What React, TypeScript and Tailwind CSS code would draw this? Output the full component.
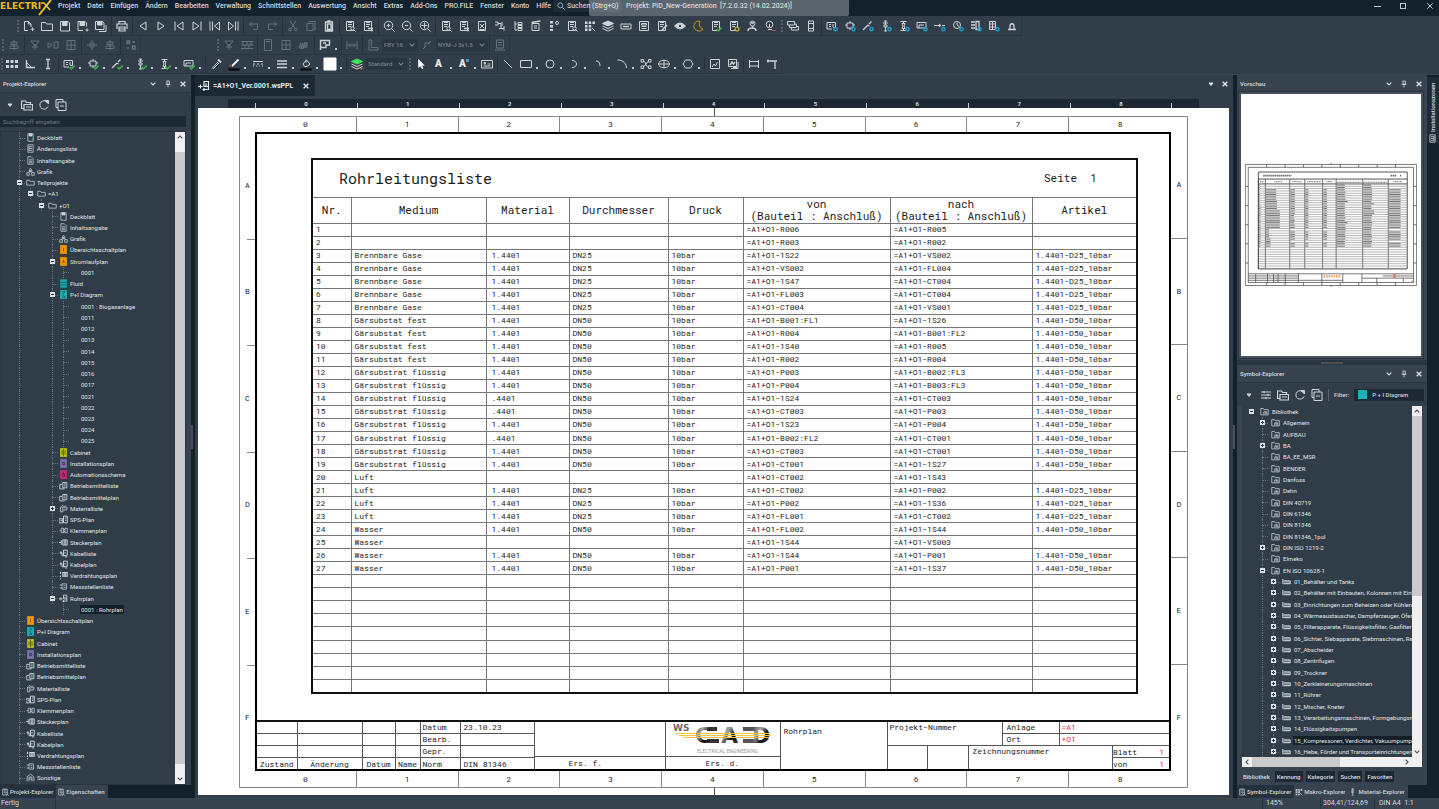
import React from 'react';
import clsx from 'clsx';

type Row = [string, string, string, string, string];

// medium, material, diameter, from, to
const pipeRows: Row[] = [
  ['', '', '', 'R006', 'R005'],
  ['', '', '', 'R003', 'R002'],
  ['Brennbare Gase', '1.4401', 'DN25', '1S22', 'VS002'],
  ['Brennbare Gase', '1.4401', 'DN25', 'VS002', 'FL004'],
  ['Brennbare Gase', '1.4401', 'DN25', '1S47', 'CT004'],
  ['Brennbare Gase', '1.4401', 'DN25', 'FL003', 'CT004'],
  ['Brennbare Gase', '1.4401', 'DN25', 'CT004', 'VS001'],
  ['Gärsubstat fest', '1.4401', 'DN50', 'B001:FL1', '1S26'],
  ['Gärsubstat fest', '1.4401', 'DN50', 'R004', 'B001:FL2'],
  ['Gärsubstat fest', '1.4401', 'DN50', '1S40', 'R005'],
  ['Gärsubstat fest', '1.4401', 'DN50', 'R002', 'R004'],
  ['Gärsubstrat flüssig', '1.4401', 'DN50', 'P003', 'B002:FL3'],
  ['Gärsubstrat flüssig', '1.4401', 'DN50', 'P004', 'B003:FL3'],
  ['Gärsubstrat flüssig', '.4401', 'DN50', '1S24', 'CT003'],
  ['Gärsubstrat flüssig', '.4401', 'DN50', 'CT003', 'P003'],
  ['Gärsubstrat flüssig', '1.4401', 'DN50', '1S23', 'P004'],
  ['Gärsubstrat flüssig', '.4401', 'DN50', 'B002:FL2', 'CT001'],
  ['Gärsubstrat flüssig', '1.4401', 'DN50', 'CT003', 'CT001'],
  ['Gärsubstrat flüssig', '1.4401', 'DN50', 'CT001', '1S27'],
  ['Luft', '', '', 'CT002', '1S43'],
  ['Luft', '1.4401', 'DN25', 'CT002', 'P002'],
  ['Luft', '1.4401', 'DN25', 'P002', '1S36'],
  ['Luft', '1.4401', 'DN25', 'FL001', 'CT002'],
  ['Wasser', '1.4401', 'DN50', 'FL002', '1S44'],
  ['Wasser', '', '', '1S44', 'VS003'],
  ['Wasser', '1.4401', 'DN50', '1S44', 'P001'],
  ['Wasser', '1.4401', 'DN50', 'P001', '1S37'],
];

const EMPTY_ROWS = 9;

function toCells([medium, material, dn, from, to]: Row, index: number): string[] {
  return [
    String(index + 1),
    medium,
    material,
    dn,
    dn && '10bar',
    `=A1+O1-${from}`,
    `=A1+O1-${to}`,
    dn && `1.4401-${dn.replace('N', '')}_10bar`,
  ];
}

/* ---------- icons, all drawn on a 12 x 12 grid ---------- */

const doc = <path d="M2.5 1.5h7v9h-7z" />;
const docLines = <path d="M4 4.5h4M4 6.5h3M4 2.5h4" />;
const lens = (
  <>
    <circle cx="8.5" cy="8.5" r="1.7" fill="#313e49" />
    <path d="M10 10l1.5 1.5" />
  </>
);
const check = <path d="M6.5 9l1.8 1.8L11.6 7.6" stroke="#36b34a" strokeWidth="1.6" />;
const blueDot = <circle cx="9.5" cy="9.2" r="1.6" stroke="#1b9bc9" strokeWidth="1.5" />;

const icons: Record<string, React.ReactNode> = {
  newDoc: <path d="M5 10.5H1.500v-9h4l2.500 2.500v3M5.500 1.500V4h2.500M9.500 7.500v3.500M7.700 9.200h3.600" />,
  folder: <path d="M.5 10.500v-8h4l1 1.500h6v6.500z" />,
  save: (
    <>
      <path d="M1.500 1.500h7.500l1.500 1.500v8h-9z" />
      <path d="M3.500 1.500h4.500v4h-4.500z" fill="currentColor" />
    </>
  ),
  saveAs: (
    <>
      <path d="M6 10.500H1V1.500h7l1.500 1.500v3.500M10 8.500v3M8.500 10h3" />
      <path d="M3 1.500h4.500v4H3z" fill="currentColor" />
    </>
  ),
  saveAll: (
    <>
      <path d="M.5 1.500h7l1.500 1.500v6.500H.5zM11 5v6.500H4" />
      <path d="M2.500 1.500H7v3.500H2.500z" fill="currentColor" />
    </>
  ),
  print: <path d="M3 3.500v-2h6v2M1 9V4h10v5M3 7h6v4H3zM3 9h6" strokeWidth="1.2" />,
  prev: <path d="M9 2v8L3 6z" />,
  next: <path d="M3 2v8l6-4z" />,
  first: <path d="M2 1.500v9M10 2v8L4 6z" />,
  last: <path d="M10 1.500v9M2 2v8l6-4z" />,
  rewind: <path d="M1 1.500v9M3.500 1.500v9M10.500 2v8l-5-4z" />,
  forward: <path d="M11 1.500v9M8.500 1.500v9M1.500 2v8l5-4z" />,
  undo: <path d="M4 1.500L1.500 4 4 6.500M1.500 4h8v5.500H5" />,
  redo: <path d="M8 1.500L10.500 4 8 6.500M10.500 4h-8v5.500H7" />,
  cut: (
    <>
      <path d="M3 1l5 7.500M9 1L4 8.500" />
      <circle cx="3" cy="9.500" r="1.300" />
      <circle cx="9" cy="9.500" r="1.300" />
    </>
  ),
  copy: <path d="M4 2.500v-1h6v8H8.500M2 3.500h6v7H2z" />,
  paste: <path d="M2.500 2h7v9h-7zM4.500 4h3.500v5.500H4.500zM4.500 1h3" strokeWidth="1.3" />,
  docSearch: <>{doc}{docLines}{lens}</>,
  docOut: <>{doc}{docLines}<path d="M6 8.500h5M9 10.500h2" strokeWidth="1.4" /></>,
  zoomIn: <><circle cx="5.500" cy="5.500" r="4.200" /><path d="M8.600 8.600l3 3M5.500 3.800v3.400M3.800 5.500h3.400" /></>,
  zoomOut: <><circle cx="5.500" cy="5.500" r="4.200" /><path d="M8.600 8.600l3 3M3.800 5.500h3.400" /></>,
  zoomFit: <><circle cx="5.500" cy="5.500" r="4.200" /><path d="M8.600 8.600l3 3M5.500 2.500v6M2.500 5.500h6" /></>,
  magnifier: <><circle cx="5" cy="5" r="3.700" /><path d="M8 8l3.500 3.500" /></>,
  docX: <>{doc}<path d="M4 4l4 4M8 4L4 8M3.500 9.500h5" /></>,
  symbols: <path d="M1 2h3v3H1M4 3.500h3v5H5M7 8.500h3M8 2v4M10 6v4.500" />,
  treeList: <path d="M3 1v9h2M3 4h2M6 2.500h4v2H6zM6 5.500h4v2H6zM6 8.500h4v2H6z" />,
  stamp: <><path d="M2 3.500h7v7H2zM4 6h3M4 8h3" /><path d="M1.500 2.500l9-1.500" strokeWidth="1.600" /></>,
  dots: <><path d="M2 1h3v2.500H2zM2 5h3v2.500H2zM2 9h3v2H2z" fill="currentColor" stroke="none" /><circle cx="9" cy="3" r="1.500" /></>,
  grid: <><path d="M1 1.500h2.500V4H1zM4.700 1.500h2.500V4H4.700zM8.400 1.500h2.500V4H8.400zM1 5h2.500v2.500H1zM4.700 5h2.500v2.500H4.700zM1 8.500h2.500V11H1zM4.700 8.500h2.500V11H4.700z" fill="currentColor" stroke="none" /><path d="M8 8l3 3" /></>,
  layers: <><path d="M6 1l5.500 2.500L6 6 .5 3.500z" fill="currentColor" /><path d="M.5 6L6 8.500 11.500 6M.5 8.500L6 11l5.500-2.500" /></>,
  greenLayers: <><path d="M6 1l5.500 2.500L6 6 .5 3.500z" fill="#42e05c" stroke="#42e05c" /><path d="M.5 6L6 8.500 11.500 6M.5 8.500L6 11l5.500-2.500" /><circle cx="10.500" cy="10.500" r="1" fill="#d9772b" stroke="none" /></>,
  tray: <><path d="M1 4h10v5H1z" /><path d="M3 6.500h6" strokeWidth="1.500" /></>,
  form: <path d="M1.500 1.500h9v9h-9zM3.500 3.500h5v1.500h-5zM3.500 6.500h5M3.500 8.500h5" />,
  docEdit: <>{doc}{docLines}<path d="M6 10l5-5" strokeWidth="1.600" /></>,
  eye: <><path d="M.5 6Q6 0 11.500 6 6 12 .5 6z" fill="currentColor" /><circle cx="6" cy="6" r="1.700" fill="#313e49" /></>,
  moon: <path d="M8 1.200A5 5 0 1 0 11 9 5.200 5.200 0 0 1 8 1.200z" stroke="#c9971c" />,
  docCheck: <>{doc}{docLines}{check}</>,
  docGear: <>{doc}{docLines}<circle cx="9" cy="9" r="1.900" stroke="#c7b429" fill="#313e49" strokeWidth="1.300" /></>,
  user: <><circle cx="6.500" cy="3.500" r="2.500" /><path d="M6.500 6v2M2 11c0-4 8-4 8 0M5 3h3" strokeWidth="1.500" /></>,
  userOff: <><circle cx="5.500" cy="4.500" r="3.300" /><path d="M4 9.500h4M5.500 4v3" /><path d="M8 10.500h4" stroke="#b5543a" /></>,
  windows: <path d="M.5 1.500h7V5h-7zM2.500 5v2.500h7V4H7.500M4.500 7.500V10h7V6.500h-2" />,
  device: <path d="M3.500 1h5v10h-5zM4 3.500h4M4 8.500h4" />,
  sheet: <path d="M1 2.500h8.500v5H7M1 2.500v6.500h5M3 4.500h2M3 6.500h2M7 4v3" />,
  macro: <path d="M1 5h2M3 3h6v5H3zM9 5h2M6 1v2M6 8v2" />,
  wire: <path d="M1 10l3-3M7 4l2.500-2.500M3.500 7.500L6 5M5.500 5l2 1" strokeWidth="1.300" />,
  pin: <path d="M4 1h3M5.500 1v4M4 5h3v2H4zM5.500 7v4M3 3h5M4 11h3" />,
  clamp: <path d="M2.500 1.500h6M5.500 1.500v2M4 3.500h3l-1 2.500 1 2.500H4L5 6zM5.500 8.500v2M2.500 10.500h6" />,
  frame: <path d="M1 2.500h9v5.500H1zM3 5h5M3 5v3" />,
  arrow: <path d="M0 5.500h6M5 4l2 1.500L5 7M8 5.500h3" />,
  gauge: <><circle cx="5" cy="5" r="3.500" /><path d="M5 5V2.500M5 5l2 1.500" /></>,
  bars: <path d="M1 2h4M1 5h4M1 8h4M6 1.500v8h3v-8z" strokeWidth="1.300" />,
  rack: <path d="M1.500 1.500h6v8h-6zM1.500 4h6M1.500 7h6M4.500 1.500v8" />,
  bell: <path d="M4 9V6c0-3 4-3 4 0v3M2 9.500h8" strokeWidth="1.300" />,
  valve: <path d="M2 2h8L7 6H5zM4 6h4M6 6v5M3 8h6" />,
  align: <path d="M6 1v10M3 3h6v2.500H3zM2 7h8v2.500H2z" />,
  flip: <path d="M1 4l4 2-4 3zM7 3h4v6H7z" />,
  nodes: <path d="M1 6h10M4 4h4v4H4zM6 1v3M6 8v3" />,
  scatter: <path d="M2 2h2.500v2.500H2zM7 3h3M7.500 7h2.500v3H7.500zM3 8v2" strokeWidth="1.400" />,
  brick: <path d="M0 2.500h12M0 6h12M0 9.500h12M2 2.500V6M6 2.500V6M10 2.500V6M4 6v3.500M8 6v3.500" />,
  door: <path d="M2.500.5h7v11h-7zM4 2.500h4" />,
  panel: <path d="M2 1.500h8v9H2zM6 1.500v9M2 6h8" />,
  hatch: <path d="M1 9l2-5v6l2-6v6l2-7v6l2-6v6" />,
  plan: <path d="M1.500 11V1.500h9V6H7v2.500H1.500M4 4h3" strokeWidth="1.400" />,
  measure: <path d="M1 2v8M11 2v8M1 6h10M4 4v4M8 4v4" />,
  angle: <path d="M2 1h2.500v7.500H11V11H2z" />,
  plug: <path d="M2 10l3-3M7 5l3-3M4 8V4l5 0" />,
  report: <path d="M2.500 1h7v8h-7zM4 3.500h4M4 6h4M1 11h10" />,
  table: <path d="M0 2h3v3H0zM4.500 2h3v3h-3zM9 2h3v3H9zM0 7h3v3H0zM4.500 7h3v3h-3zM9 7h3v3H9z" fill="currentColor" stroke="none" />,
  elbow: <><path d="M2.500 2v7.500H11" strokeWidth="1.400" /><path d="M3 5l4 4" /></>,
  ibeam: <path d="M4 1.500h4M4 10.500h4M6 1.500v9" strokeWidth="1.300" />,
  pipette: <><path d="M2 10.500L8 4M3 11l6-6" /><path d="M8 1.500l3 3" strokeWidth="2" /></>,
  pen: <><path d="M4 8l6.500-6.500" strokeWidth="1.800" stroke="#f4f4f4" /><path d="M1 7l3 1" stroke="#b35a2c" /><path d="M.5 11.500h11" stroke="#000" strokeWidth="2" /></>,
  dash: <path d="M1 3.500h10M1 6h2M5 6h2M9 6h2M1 8h1M4 8h1M7 8h1M10 8h1" />,
  widths: <path d="M1 3h10M1 6h10M1 9.500h10" strokeWidth="1.700" />,
  bucket: <><path d="M3 6l3.500-4L10 6l-3 2.500H4.500zM6 1.500v3" /><path d="M.5 11.500h11" stroke="#000" strokeWidth="2" /></>,
  white: <path d="M0 0h12v12H0z" fill="#fff" stroke="#fff" />,
  cursor: <path d="M3.500 1.500v8l2-1.800 1.500 3 1-.5L6.700 7.300h2.500z" fill="#fff" stroke="#fff" strokeWidth=".6" />,
  image: <><path d="M1.500 1.500h9v9h-9z" /><path d="M3 9l2-3 1.500 2L8.500 4" /></>,
  images: <><path d="M1.500 1.500h8v7h-8zM4 10.500h7V4" /><path d="M3 7l2-3 1.500 2L8 4M6 9.500h4" strokeWidth="1.500" /></>,
  textBox: <path d="M.5 2.500h11v7.500H.5zM2.500 8h7M6.500 6h3M3 4.500h1.500V6H3z" />,
  line: <path d="M2 2l8 8" />,
  rect: <path d="M.5 2.500h11v7H.5z" />,
  circle: <circle cx="6" cy="6" r="4" />,
  arc: <path d="M4 2.500c6 0 6 7 0 7" />,
  arcSmall: <path d="M4 3c3 0 4 2 4 5" />,
  arcBig: <path d="M1.500 2c6 0 9 4 9 8" />,
  spline: <path d="M1 1.500h2.500V4H1zM8.500 1.500H11V4H8.500zM1 8h2.500v2.500H1zM8.500 8H11v2.500H8.500zM3.500 3C6 3 5 9 8.500 9M3.500 9L8.500 3" />,
  ellipse: <><ellipse cx="6" cy="6" rx="5.500" ry="3.700" /><path d="M6 2v8M.5 6h11" /></>,
  hexagon: <path d="M3.500 2h5l2.500 4-2.500 4h-5L1 6z" />,
  dimension: <path d="M1.500 2v8M10.500 2v8M1.500 3.500h9M1.500 8h9" />,
  polyline: <path d="M1 3h8v8M2 1.500v3M7.500 3H11" strokeWidth="1.300" />,
  refresh: <><path d="M9.500 3.500A4.200 4.200 0 1 0 10 7.500" /><path d="M7 1.500h3.500V5z" fill="currentColor" /></>,
  collapse: <path d="M3 8.500H1v-8h7V3M3 3h8v8.500H3zM5 7h4" />,
  explorer: <path d="M3 9.500H.5V2h4l1 1.500h4v2M3 5.500h8.500v5.500H3zM5 8h5" strokeWidth="1.200" />,
  filters: <path d="M1 3h10M1 6h10M1 9h10M4 2v2M8 5v2M6 8v2" strokeWidth="1.200" />,
  pushpin: <path d="M4 1.500h4M4.500 1.500v5h3.500v-5M2.500 6.500h7M6 6.500V11" strokeWidth="1.200" />,
  chevron: <path d="M2.500 4l3.500 3.500L9.500 4" strokeWidth="1.700" />,
  close: <path d="M2.500 2.500l7 7M9.500 2.500l-7 7" strokeWidth="2" />,
  down: <path d="M4 5h4L6 7.500z" fill="currentColor" />,
  // tree icons
  cover: <><path d="M2.500 1h7v10h-7z" /><path d="M4 1h4v3H4z" fill="currentColor" /></>,
  list: <path d="M2.500 1h7v10h-7zM4 3.500h4M4 6h4M4 8.500h4M4 3v6" />,
  text: <path d="M2.500 1h4.500l2.500 2.500V11h-7zM4 5h4M4 7h4M4 9h4" />,
  shapes: <path d="M6 1.500l2 3.500H4zM6 5v2M1 7.500h3.500V11H1zM7.500 7.500H11V11H7.500zM3 7l3-2 3 2" />,
  treeFolder: <path d="M1 9.500V3h3.500l1 1.500H11v5z" />,
  treeFolderSub: <path d="M1 10.500V2h3.500l1 1.500H11v7zM5 10v-3.500h4V10M7 6.500v3" />,
  rackSmall: <path d="M1 3v6h10V5H3L1 3M1 6.500h10M3 8.500h8" strokeWidth="1.200" />,
  orange: <><path d="M2 .5h8v11H2z" fill="#f49404" stroke="#f49404" /><path d="M6 3.500v5" stroke="#7a4a02" /></>,
  orangePlus: <><path d="M2 .5h8v11H2z" fill="#f49404" stroke="#f49404" /><path d="M6 3.500v3M4 7h4" stroke="#7a4a02" /></>,
  fluid: <><path d="M2 1h8v10H2z" fill="#1fa7b4" stroke="#1fa7b4" /><path d="M2 4.500h8M2 8h8" stroke="#0d4c58" /></>,
  pid: <><path d="M2 .5h8v11H2z" fill="#1cb0b8" stroke="#1cb0b8" /><path d="M4 2.500h4L5 6l3 3.500H4" stroke="#0d4c58" /></>,
  cabinet: <><path d="M2 .5h8v11H2z" fill="#c3c414" stroke="#c3c414" /><path d="M4 3v6M8 3v6M6 1v10" stroke="#4a4b0a" /></>,
  install: <><path d="M2 .5h8v11H2z" fill="#7d70ad" stroke="#7d70ad" /><path d="M5 4.500h2.500v3H5z" stroke="#2c2650" /></>,
  automation: <><path d="M2 .5h8v11H2z" fill="#c42a7c" stroke="#c42a7c" /><path d="M4.500 5h3v3.500h-3zM6 3v2" stroke="#5c0f3a" /></>,
  parts: <path d="M5 2h5.500v7H5zM1 4.500h3M1 4.500v6h6.500M6.500 4h2.500M6.500 6.500h2.500" strokeWidth="1.200" />,
  material: <path d="M2 10.500V4h3v6.500zM5 8h5l1-3H6M6 3h4M4 1.500l2 1.500" />,
  sps: <path d="M6 1.500h5v9H6zM8 4h2M8 7h2M0 5h5v5.500H0zM2 7.500h2" strokeWidth="1.300" />,
  terminal: <path d="M3 3h3v6H3zM8 3h3v6H8zM1 6h2M6 4.500h2M6 7.500h2" />,
  connector: <path d="M0 6h3M3 3v6M5 2.500h6v7H5zM7 2.500v7M9 2.500v7" strokeWidth="1.200" />,
  cable: <path d="M6 1.500h5v7H6zM8 4v2M1 5h3v4h4M2.500 3v4M8 10.500h3" strokeWidth="1.300" />,
  wiring: <path d="M2 1v3M2 6v2M2 9.500V11M5 2h6v5H5zM7 2v5M9 2v5" strokeWidth="1.400" />,
  points: <path d="M4 2.500h6v7H4zM1 4h3M1 8h3M6 5h2.500M6 7.500h2.500" />,
  pipe: <path d="M6 1.500h4.500v5H6zM0 6.500h4.500M2.500 4.500v4M4.500 9.500h6v-3M8 3.500v3M6 8v3" strokeWidth="1.200" />,
  other: <path d="M1.500 11V5L6 1.500 10.500 5v6M4 11V5.500h4V11M4 8h4" />,
};

interface IconProps {
  name: string;
  className?: string;
}

function Icon({ name, className = 'size-3' }: IconProps) {
  return (
    <svg viewBox="0 0 12 12" fill="none" stroke="currentColor" className={clsx('shrink-0', className)} aria-hidden="true">
      {icons[name]}
    </svg>
  );
}

/* ---------- toolbars ---------- */

interface ToolProps {
  name: string;
  menu?: boolean;
  dim?: boolean;
  badge?: 'check' | 'dot';
}

function Tool({ name, menu, dim, badge }: ToolProps) {
  return (
    <button
      type="button"
      aria-label={name}
      className={clsx('flex h-full shrink-0 items-center', dim ? 'text-[#65707a]' : 'text-[#cfd3d6]', menu ? 'w-6' : 'w-[18px]')}
    >
      <svg viewBox="0 0 12 12" fill="none" stroke="currentColor" className="ml-[3px] size-3 overflow-visible" aria-hidden="true">
        {icons[name]}
        {badge === 'check' && check}
        {badge === 'dot' && blueDot}
      </svg>
      {menu && <span className="mt-2 ml-1 size-[2px] shrink-0 bg-[#c3c8cc]" />}
    </button>
  );
}

function Tools({ names, ...rest }: { names: string[] } & Omit<ToolProps, 'name'>) {
  return (
    <>
      {names.map((name, i) => (
        <Tool key={i} name={name} {...rest} />
      ))}
    </>
  );
}

const Sep = () => <span className="mx-[1px] h-[18px] w-px shrink-0 bg-[#25313c]" />;

const Handle = ({ className = 'w-[5px]' }: { className?: string }) => (
  <span className={clsx('flex shrink-0 justify-center', className)}>
    <span className="h-3 border-l-2 border-dotted border-[#56616b]" />
  </span>
);

function ToolSelect({ label, value, className }: { label: string; value: string; className: string }) {
  return (
    <span className={clsx('relative flex h-3 shrink-0 items-center bg-[#293540] text-[#76808a]', className)}>
      <select aria-label={label} className="h-full w-full appearance-none px-[2px] text-[6px] leading-[12px] font-medium">
        <option>{value}</option>
      </select>
      <Icon name="chevron" className="pointer-events-none absolute right-0.5 size-2" />
    </span>
  );
}

const bar = 'flex items-center border-r border-b border-[#293540]';

function Toolbars() {
  return (
    <div className="shrink-0 border-b border-[#3a4752] bg-[#313e49]">
      <div className="flex h-5">
        <div className={clsx(bar, 'ml-[15px]')}>
          <Handle />
          <Tools names={['newDoc', 'folder', 'save', 'saveAs', 'saveAll']} />
          <Sep />
          <Tool name="print" />
          <Sep />
          <Tools names={['prev', 'next', 'first', 'last', 'rewind', 'forward']} />
          <Sep />
          <Tools names={['undo', 'redo']} dim />
          <Sep />
          <Tools names={['cut', 'copy']} dim />
          <Tool name="paste" />
          <Sep />
          <Tools names={['docSearch', 'docOut']} />
          <Sep />
          <Tools names={['zoomIn', 'zoomOut', 'zoomFit']} />
          <Sep />
          <Tools
            names={[
              'docSearch', 'docOut', 'docX', 'symbols', 'treeList', 'stamp', 'dots', 'docSearch', 'grid', 'layers',
              'tray', 'form', 'docEdit', 'eye', 'moon', 'docCheck', 'docGear', 'user', 'userOff',
            ]}
          />
          <Handle />
          <Tools names={['windows', 'device']} />
          <Sep />
          <Tools names={['sheet', 'macro', 'wire', 'pin', 'clamp', 'frame', 'arrow', 'gauge', 'bars', 'rack']} badge="dot" />
          <Tool name="bell" />
        </div>
      </div>
      <div className="flex h-[19px]">
        <div className={bar}>
          <Handle />
          <Tool name="align" dim />
          <Sep />
          <Tools names={['valve', 'flip', 'panel']} dim />
          <Sep />
          <Tools names={['nodes', 'align']} dim />
          <Sep />
          <Tool name="scatter" dim />
        </div>
        <div className={clsx(bar, 'ml-[74px]')}>
          <Handle />
          <Tools names={['valve', 'brick']} dim />
          <Sep />
          <Tools names={['door', 'panel', 'hatch']} dim />
          <Sep />
          <Tool name="plan" menu />
          <Sep />
          <Tool name="measure" dim />
          <Sep />
          <Tool name="angle" dim />
          <ToolSelect label="Kabeltyp" value="FBY 16" className="w-9" />
          <Tool name="plug" dim />
          <ToolSelect label="Kabel" value="NYM-J 3x1,5" className="w-[52px]" />
          <Sep />
          <Tool name="report" dim />
        </div>
      </div>
      <div className="flex h-[19px]">
        <div className={bar}>
          <Handle className="w-[3px]" />
          <Tools names={['table', 'elbow', 'ibeam']} />
          <Sep />
          <Tools names={['sheet', 'macro', 'wire', 'pin', 'clamp', 'frame']} menu badge="check" />
          <Sep />
          <Tool name="pipette" />
          <Tools names={['pen', 'dash', 'widths', 'bucket', 'white']} menu />
          <Sep />
          <Tool name="greenLayers" />
          <ToolSelect label="Ebene" value="Standard" className="w-[41px]" />
          <Handle />
          <Tool name="cursor" />
          <TextTool label="Text" />
          <TextTool label="Text mit Feld" accent />
          <Tool name="textBox" />
          <Sep />
          <Tool name="line" />
          <Tools names={['rect', 'circle', 'arc', 'arcSmall', 'arcBig']} menu />
          <Tool name="spline" />
          <Tools names={['ellipse', 'hexagon']} menu />
          <Sep />
          <Tools names={['image', 'images']} />
          <Sep />
          <Tools names={['dimension', 'polyline']} />
        </div>
      </div>
    </div>
  );
}

function TextTool({ label, accent }: { label: string; accent?: boolean }) {
  return (
    <button type="button" aria-label={label} className="flex h-full w-6 shrink-0 items-center text-[#e8eaeb]">
      <span className="ml-[5px] text-[10px] leading-3 font-black">A</span>
      {accent && <span className="mb-2 size-[3px] bg-[#3a9bd6]" />}
      <span className="mt-2 mr-0.5 ml-auto size-[2px] bg-[#c3c8cc]" />
    </button>
  );
}

/* ---------- title bar ---------- */

const menus = [
  'Projekt', 'Datei', 'Einfügen', 'Ändern', 'Bearbeiten', 'Verwaltung', 'Schnittstellen', 'Auswertung',
  'Ansicht', 'Extras', 'Add-Ons', 'PRO.FILE', 'Fenster', 'Konto', 'Hilfe',
];

function TitleBar() {
  return (
    <header className="flex h-4 shrink-0 items-start bg-[#13212d] text-[7px] leading-[12px] font-medium text-[#d3d8dc]">
      <div className="relative flex h-4 w-[58px] shrink-0 font-['DejaVu_Sans'] text-[9px] leading-[13px] font-bold text-[#e8bc1d]">
        <span>ELECTRI</span>
        <svg viewBox="0 0 14 16" className="absolute top-0 left-[38px] h-4 w-[14px]" aria-hidden="true">
          <path d="M1 15L13 0" stroke="#f0c31c" strokeWidth="2" />
          <path d="M3 3h3l6 7" fill="none" stroke="#f0c31c" strokeWidth="1.500" />
        </svg>
      </div>
      <nav className="flex gap-[7px]">
        {menus.map((menu) => (
          <button key={menu} type="button">
            {menu}
          </button>
        ))}
      </nav>
      <label className="ml-[3px] flex h-3 w-[67px] shrink-0 items-center gap-0.5 bg-[#1f2c38] pl-[3px]">
        <Icon name="magnifier" className="size-2" />
        <input
          aria-label="Suchen"
          placeholder="Suchen (Strg+Q)"
          className="w-full min-w-0 text-[7px] leading-[12px] placeholder:text-[#c5cbd0] placeholder:opacity-100"
        />
      </label>
      <div className="relative pl-[5px] whitespace-pre">
        <span className="absolute top-0 -left-8 h-4 w-[260px] rounded-b-xs bg-white/30" />
        <span className="relative">Projekt: PID_New-Generation  [7.2.0.32 (14.02.2024)]</span>
      </div>
      <div className="ml-auto flex items-center gap-4 pr-[5px] text-[#c5cbd0]">
        <button type="button" aria-label="Minimieren" className="flex h-3 w-[10px] items-center">
          <span className="h-px w-[7px] bg-current" />
        </button>
        <button type="button" aria-label="Maximieren" className="flex h-3 w-[10px] items-center">
          <span className="size-[6px] border border-current" />
        </button>
        <button type="button" aria-label="Schließen">
          <svg viewBox="0 0 12 12" className="size-2" fill="none" stroke="currentColor" aria-hidden="true">
            <path d="M2 2l8 8M10 2l-8 8" strokeWidth="1.500" />
          </svg>
        </button>
      </div>
    </header>
  );
}

/* ---------- trees ---------- */

interface TreeItem {
  depth: number;
  label: string;
  icon?: string;
  open?: boolean;
  closed?: boolean;
  selected?: boolean;
  guides?: number[];
}

const item = (depth: number, icon: string | undefined, label: string, extra: Partial<TreeItem> = {}): TreeItem => ({
  depth,
  icon,
  label,
  ...extra,
});

const planTail: [string, string][] = [
  ['parts', 'Betriebsmittelliste'],
  ['parts', 'Betriebsmittelplan'],
  ['material', 'Materialliste'],
  ['sps', 'SPS-Plan'],
  ['terminal', 'Klemmenplan'],
  ['connector', 'Steckerplan'],
  ['cable', 'Kabelliste'],
  ['cable', 'Kabelplan'],
  ['wiring', 'Verdrahtungsplan'],
  ['points', 'Messstellenliste'],
];

const projectTree: TreeItem[] = [
  item(0, 'cover', 'Deckblatt'),
  item(0, 'list', 'Änderungsliste'),
  item(0, 'text', 'Inhaltsangabe'),
  item(0, 'shapes', 'Grafik'),
  item(0, 'treeFolder', 'Teilprojekte', { open: true }),
  item(1, 'treeFolder', '=A1', { open: true, guides: [0] }),
  item(2, 'treeFolder', '+O1', { open: true, guides: [0] }),
  item(3, 'cover', 'Deckblatt', { guides: [0] }),
  item(3, 'text', 'Inhaltsangabe', { guides: [0] }),
  item(3, 'shapes', 'Grafik', { guides: [0] }),
  item(3, 'orange', 'Übersichtsschaltplan', { guides: [0] }),
  item(3, 'orangePlus', 'Stromlaufplan', { open: true, guides: [0] }),
  item(4, undefined, '0001', { guides: [0, 3] }),
  item(3, 'fluid', 'Fluid', { guides: [0] }),
  item(3, 'pid', 'P+I Diagram', { open: true, guides: [0] }),
  ...['0001 : Biogasanlage', '0011', '0012', '0013', '0014', '0015', '0016', '0017', '0021', '0022', '0023', '0024', '0025'].map(
    (label) => item(4, undefined, label, { guides: [0, 3] }),
  ),
  item(3, 'cabinet', 'Cabinet', { guides: [0] }),
  item(3, 'install', 'Installationsplan', { guides: [0] }),
  item(3, 'automation', 'Automationsschema', { guides: [0] }),
  ...planTail.map(([icon, label]) => item(3, icon, label, { closed: icon === 'material', guides: [0] })),
  item(3, 'pipe', 'Rohrplan', { open: true, guides: [0] }),
  item(4, undefined, '0001 : Rohrplan', { selected: true, guides: [0] }),
  item(0, 'orange', 'Übersichtsschaltplan'),
  item(0, 'pid', 'P+I Diagram'),
  item(0, 'cabinet', 'Cabinet'),
  item(0, 'install', 'Installationsplan'),
  ...planTail.map(([icon, label]) => item(0, icon, label)),
  item(0, 'other', 'Sonstige'),
];

const closedLibraries = ['Allgemein', 'BA', 'DIN ISO 1219-2'];

const libraryTree: TreeItem[] = [
  item(0, 'treeFolderSub', 'Bibliothek', { open: true }),
  ...[
    'Allgemein', 'AUFBAU', 'BA', 'BA_EE_MSR', 'BENDER', 'Danfoss', 'Dehn', 'DIN 40719', 'DIN 61346', 'DIN 81346',
    'DIN 81346_1pol', 'DIN ISO 1219-2', 'Elmeko',
  ].map((label) => item(1, 'treeFolderSub', label, { closed: closedLibraries.includes(label) })),
  item(1, 'treeFolderSub', 'EN ISO 10628-1', { open: true }),
  ...[
    '01_Behälter und Tanks',
    '02_Behälter mit Einbauten, Kolonnen mit Einbauten',
    '03_Einrichtungen zum Beheizen oder Kühlen',
    '04_Wärmeaustauscher, Dampferzeuger, Öfen',
    '05_Filterapparate, Flüssigkeitsfilter, Gasfilter',
    '06_Sichter, Siebapparate, Siebmaschinen, Rechen',
    '07_Abscheider',
    '08_Zentrifugen',
    '09_Trockner',
    '10_Zerkleinerungsmaschinen',
    '11_Rührer',
    '12_Mischer, Kneter',
    '13_Verarbeitungsmaschinen, Formgebungsmaschinen',
    '14_Flüssigkeitspumpen',
    '15_Kompressoren, Verdichter, Vakuumpumpen',
    '16_Hebe, Förder und Transporteinrichtungen',
  ].map((label) => item(2, 'rackSmall', label, { closed: true, selected: label.startsWith('15'), guides: [1] })),
];

function TreeRow({ node, wide }: { node: TreeItem; wide?: boolean }) {
  const cells = Array.from({ length: node.depth + 1 }, (_, i) => i);
  return (
    <li className="flex min-h-0 flex-1 items-center">
      {cells.map((cell) => {
        const branch = cell === node.depth;
        return (
          <span key={cell} className="relative flex h-full w-[11px] shrink-0 items-center justify-center">
            {(branch || node.guides?.includes(cell)) && !(wide && cell === 0) && (
              <span className="absolute inset-y-0 left-[5px] border-l border-dotted border-[#67727c]" />
            )}
            {branch && !(wide && cell === 0) && (
              <span className="absolute top-1/2 right-0 left-[5px] border-t border-dotted border-[#67727c]" />
            )}
            {branch && (node.open || node.closed) && (
              <span className="relative flex size-[5px] items-center justify-center bg-[#dfe2e4]">
                <span className="h-px w-[3px] bg-[#313e49]" />
                {node.closed && <span className="absolute h-[3px] w-px bg-[#313e49]" />}
              </span>
            )}
          </span>
        );
      })}
      <span className={clsx('flex shrink-0 justify-center text-[#cdd2d6]', wide ? 'w-[14px]' : 'w-[11px]')}>
        {node.icon && <Icon name={node.icon} className="size-[9px]" />}
      </span>
      <span className={clsx('px-[1px] whitespace-nowrap', node.selected && 'bg-[#14212d]')}>{node.label}</span>
    </li>
  );
}

function PanelHeader({ title }: { title: string }) {
  return (
    <div className="flex h-[17px] shrink-0 items-center bg-[#37434f] pr-1 pl-[3px] text-[#d8dcdf]">
      <h2 className="grow truncate text-[6px] leading-3 font-medium">{title}</h2>
      <div className="flex gap-[7px]">
        {['chevron', 'pushpin', 'close'].map((name) => (
          <button key={name} type="button" aria-label={name}>
            <Icon name={name} className="size-2" />
          </button>
        ))}
      </div>
    </div>
  );
}

function DockTabs({ tabs }: { tabs: [string, string][] }) {
  return (
    <div className="flex h-[13px] shrink-0 bg-[#13212d] text-[6px] leading-3 font-medium text-[#cfd4d8]">
      {tabs.map(([icon, label], i) => (
        <button key={label} type="button" className={clsx('flex items-center gap-[1px] pr-[3px] pl-[1px]', i === 0 ? 'bg-[#25323e]' : 'bg-[#37434f]')}>
          <Icon name={icon} className="size-2" />
          {label}
        </button>
      ))}
    </div>
  );
}

function ProjectExplorer() {
  return (
    <aside className="flex w-[191px] shrink-0 flex-col bg-[#37434f]">
      <PanelHeader title="Projekt-Explorer" />
      <div className="flex h-6 shrink-0 items-center gap-[5px] border-t border-[#293540] bg-[#313e49] pl-1 text-[#cfd3d6]">
        {['down', 'explorer', 'refresh', 'collapse'].map((name) => (
          <button key={name} type="button" aria-label={name}>
            <Icon name={name} />
          </button>
        ))}
      </div>
      <div className="bg-[#313e49] pr-[5px] pb-1">
        <input
          aria-label="Suchbegriff"
          placeholder="Suchbegriff eingeben"
          className="block h-[11px] w-full bg-[#1d2935] px-[3px] text-[6px] leading-[11px] placeholder:text-[#6d7781] placeholder:opacity-100"
        />
      </div>
      <div className="mr-[5px] flex min-h-0 flex-1 border border-[#27333e] bg-[#303d48]">
        <ul className="flex min-w-0 flex-1 flex-col overflow-hidden pl-[13px] text-[6px] leading-[9px] text-[#e0e3e5]">
          {projectTree.map((node, i) => (
            <TreeRow key={i} node={node} />
          ))}
        </ul>
        <div className="flex w-[10px] flex-col items-center bg-[#cbcbcb] text-[#555]">
          <span className="flex h-5 w-full justify-center bg-[#f0f0f0] pt-[1px]">
            <Icon name="chevron" className="size-2 rotate-180" />
          </span>
          <span className="mt-auto flex h-5 w-full items-end justify-center bg-[#f0f0f0] pb-[1px]">
            <Icon name="chevron" className="size-2" />
          </span>
        </div>
      </div>
      <DockTabs tabs={[['docSearch', 'Projekt-Explorer'], ['docSearch', 'Eigenschaften']]} />
    </aside>
  );
}

/* ---------- document ---------- */

const columnNumbers = ['0', '1', '2', '3', '4', '5', '6', '7', '8'];
const rowLetters = ['A', 'B', 'C', 'D', 'E', 'F'];

function FrameNumbers() {
  return (
    <div className="grid grid-cols-9 divide-x divide-[#888]">
      {columnNumbers.map((n) => (
        <span key={n} className="flex items-center justify-center">
          {n}
        </span>
      ))}
    </div>
  );
}

function FrameLetters({ side }: { side: 'left' | 'right' }) {
  return (
    <div className={clsx('grid grid-rows-6', side === 'right' && 'divide-y divide-[#888]')}>
      {rowLetters.map((letter, i) => (
        <span key={letter} className="relative flex items-center justify-center">
          {letter}
          {side === 'left' && i > 0 && <span className="absolute top-0 right-0 h-px w-2 bg-[#888]" />}
        </span>
      ))}
    </div>
  );
}

function PipeTable() {
  const rows = [...pipeRows.map(toCells), ...Array.from({ length: EMPTY_ROWS }, () => Array<string>(8).fill('\u00a0'))];
  return (
    <table className="h-full w-full table-fixed border-collapse border-2 border-[#111] text-[8px] leading-[9px]">
      <colgroup>
        <col className="w-[39px]" />
        <col className="w-[135px]" />
        <col className="w-[83px]" />
        <col className="w-[99px]" />
        <col className="w-[75px]" />
        <col className="w-[147px]" />
        <col className="w-[142px]" />
        <col className="w-[105px]" />
      </colgroup>
      <thead className="text-[11px] leading-[12px]">
        <tr className="h-[38px]">
          <th colSpan={7} className="pl-[26px] text-left text-[15px] font-normal">
            Rohrleitungsliste
          </th>
          <th className="pl-3 text-left font-normal whitespace-pre">Seite  1</th>
        </tr>
        <tr className="h-[26px]">
          {['Nr.', 'Medium', 'Material', 'Durchmesser', 'Druck', 'von\n(Bauteil : Anschluß)', 'nach\n(Bauteil : Anschluß)', 'Artikel'].map((head) => (
            <th key={head} className="border border-[#777] p-0 font-normal whitespace-pre">
              {head}
            </th>
          ))}
        </tr>
      </thead>
      <tbody>
        {rows.map((cells, r) => (
          <tr key={r}>
            {cells.map((cell, c) => (
              <td key={c} className={clsx('border border-[#777] p-0 whitespace-nowrap', c === 2 ? 'pl-[5px]' : 'pl-[3px]')}>
                {cell}
              </td>
            ))}
          </tr>
        ))}
      </tbody>
    </table>
  );
}

function Logo() {
  return (
    <svg viewBox="0 0 100 32" className="h-8 w-[100px] overflow-visible" role="img" aria-label="WSCAD Electrical Engineering">
      <defs>
        <linearGradient id="steel" x1="0" y1="0" x2="1" y2="1">
          <stop offset="0" stopColor="#222" />
          <stop offset=".35" stopColor="#a5a5a5" />
          <stop offset=".6" stopColor="#111" />
          <stop offset="1" stopColor="#333" />
        </linearGradient>
      </defs>
      <path d="M2 10.500h22M6 12.500h18M10 14.500h14" stroke="#f5c83c" strokeWidth="1" />
      {/* bars that run out of the letters */}
      <path d="M34 6h10M34 18h12" stroke="#333" strokeWidth="4" />
      <path d="M70 6h12M70 18h12" stroke="#555" strokeWidth="4" />
      <g fontFamily="DejaVu Sans" fontWeight="bold">
        <text x="0" y="8" fontSize="9" fill="#6b6b6b">WS</text>
        <g fontSize="22" fill="url(#steel)">
          <text x="22" y="20">C</text>
          <text x="48" y="20">A</text>
          <text x="79" y="20">D</text>
        </g>
      </g>
      <path d="M24 10.500h72M24 12.500h74M24 14.500h72" stroke="#f5c83c" strokeWidth="1" />
      <text x="24" y="30" fontSize="5" fontFamily="Roboto" fill="#999">ELECTRICAL ENGINEERING</text>
    </svg>
  );
}

const line = 'border-[#555]';

function TitleBlock() {
  const cell = clsx('border-r border-b p-0', line);
  return (
    <div className="flex h-[49px] shrink-0 border-t-2 border-[#111] text-[8px] leading-[10px]">
      <table className="w-[277px] shrink-0 table-fixed border-collapse">
        <tbody>
          {['Datum', 'Bearb.', 'Gepr.'].map((label) => (
            <tr key={label}>
              <td className={clsx(cell, 'w-[40px]')} />
              <td className={clsx(cell, 'w-[65px]')} />
              <td className={clsx(cell, 'w-[33px]')} />
              <td className={clsx(cell, 'w-[25px]')} />
              <td className={clsx(cell, 'w-[40px] pl-0.5')}>{label}</td>
              <td className={clsx(cell, 'w-[74px] pl-[3px]')}>{label === 'Datum' && '23.10.23'}</td>
            </tr>
          ))}
          <tr className="text-center">
            <td className={clsx('border-r', line)}>Zustand</td>
            <td className={clsx('border-r', line)}>Änderung</td>
            <td className={clsx('border-r', line)}>Datum</td>
            <td className={clsx('border-r', line)}>Name</td>
            <td className={clsx('border-r pl-0.5 text-left', line)}>Norm</td>
            <td className={clsx('border-r pl-[3px] text-left', line)}>DIN 81346</td>
          </tr>
        </tbody>
      </table>
      <div className="flex w-[130px] flex-col">
        <div className={clsx('flex-1 border-b', line)} />
        <div className="flex h-3 items-center pl-[34px]">Ers. f.</div>
      </div>
      <div className={clsx('flex w-[116px] flex-col border-x', line)}>
        <div className={clsx('flex flex-1 items-start justify-center border-b pt-[1px]', line)}>
          <Logo />
        </div>
        <div className="flex h-3 items-center pl-10">Ers. d.</div>
      </div>
      <div className={clsx('w-[107px] border-r pt-1 pl-[3px]', line)}>Rohrplan</div>
      <div className="flex min-w-0 flex-1 flex-col">
        <div className={clsx('flex h-6 border-b', line)}>
          <div className="w-[114px] pl-0.5">Projekt-Nummer</div>
          <dl className={clsx('grid flex-1 grid-cols-[57px_1fr] grid-rows-2 border-l', line)}>
            <dt className={clsx('border-r border-b pl-1', line)}>Anlage</dt>
            <dd className={clsx('border-b pl-0.5 text-red-500', line)}>=A1</dd>
            <dt className={clsx('border-r pl-1', line)}>Ort</dt>
            <dd className="pl-0.5 text-red-500">+O1</dd>
          </dl>
        </div>
        <div className="flex flex-1">
          <div className={clsx('w-10 border-r', line)} />
          <div className={clsx('w-[41px] border-r', line)} />
          <div className="flex-1 pl-1">Zeichnungsnummer</div>
          <div className={clsx('flex w-[57px] flex-col border-l', line)}>
            <div className={clsx('flex flex-1 items-center justify-between border-b pr-[5px]', line)}>
              Blatt<span className="text-red-500">1</span>
            </div>
            <div className="flex flex-1 items-center justify-between pr-[5px]">
              von<span className="text-red-500">1</span>
            </div>
          </div>
        </div>
      </div>
    </div>
  );
}

function DocumentView() {
  return (
    <main className="flex min-w-0 flex-1 flex-col bg-[#313e49]">
      <div className="flex h-6 shrink-0 items-start">
        <div className="flex h-[21px] items-center gap-[3px] bg-[#1c2935] pr-[5px] pl-[3px] text-[#e6e9eb]">
          <Icon name="pipe" />
          <button type="button" className="pr-1.5 text-[7px] leading-3 font-bold">
            =A1+O1_Ver.0001.wsPPL
          </button>
          <button type="button" aria-label="Tab schließen">
            <Icon name="close" className="size-2" />
          </button>
        </div>
        <div className="ml-auto flex h-[17px] items-center gap-1 pr-1 text-[#e6e9eb]">
          <button type="button" aria-label="Dokumentliste">
            <Icon name="down" />
          </button>
          <button type="button" aria-label="Dokument schließen">
            <Icon name="close" className="size-2" />
          </button>
        </div>
      </div>
      <div className="mr-[34px] ml-[33px] grid h-[9px] shrink-0 grid-cols-9 bg-[#1c2935] px-[27px] text-[6px] leading-[9px] font-bold text-[#d8dcdf]">
        {columnNumbers.map((n) => (
          <span key={n} className="relative text-center">
            <span className="absolute bottom-0 left-0 h-[5px] w-px bg-[#c3c8cc]" />
            {n}
            {n === '8' && <span className="absolute right-0 bottom-0 h-[5px] w-px bg-[#c3c8cc]" />}
          </span>
        ))}
      </div>
      <div className="relative mr-1 ml-[3px] flex min-h-0 flex-1 bg-white px-[41px] pt-2 pb-[7px] font-['Roboto_Mono','DejaVu_Sans_Mono',monospace] text-[#1c1c1c]">
        <span className="absolute top-0 left-1/2 h-2 w-px bg-[#555]" />
        <span className="absolute bottom-0 left-1/2 h-2 w-px bg-[#555]" />
        <div className="grid min-w-0 flex-1 grid-cols-[15px_minmax(0,1fr)_16px] grid-rows-[15px_minmax(0,1fr)_16px] border border-[#888] text-[8px] leading-[9px]">
          <span />
          <FrameNumbers />
          <span />
          <FrameLetters side="left" />
          <div className="flex min-h-0 min-w-0 flex-col border-2 border-black">
            <div className="min-h-0 flex-1 pt-6 pr-[34px] pb-[26px] pl-[54px]">
              <PipeTable />
            </div>
            <TitleBlock />
          </div>
          <FrameLetters side="right" />
          <span />
          <FrameNumbers />
          <span />
        </div>
      </div>
      <div className="h-[3px] shrink-0" />
    </main>
  );
}

/* ---------- right side ---------- */

const previewCols = [311, 350, 485, 568, 667, 742, 889, 1031];

function Preview() {
  const pitch = 13;
  return (
    <svg viewBox="237 108 953 687" className="w-[172px]" role="img" aria-label="Seitenvorschau">
      <g fill="none" stroke="#444">
        <path d="M239 116H1188V787H239zM714 106v10M714 787v10" strokeWidth="4" />
        <path d="M255 132H1171V770H255z" strokeWidth="4" />
        <path d="M255 722h916M255 734h278M255 746h278M255 758h524M885 746h286M1000 734h171M296 722v48M362 722v48M395 722v48M420 722v48M460 722v48M533 722v48M663 722v48M779 722v48M885 722v48M967 746v24M1114 746v24" strokeWidth="4" />
        <path d="M311 158H1136V695H311zM311 197h825M311 224h825" strokeWidth="5" />
        {previewCols.map((x) => (
          <path key={x} d={`M${x} 197V695`} strokeWidth="4" />
        ))}
        {Array.from({ length: pipeRows.length + EMPTY_ROWS }, (_, i) => (
          <path key={i} d={`M311 ${224 + (i + 1) * pitch}h825`} stroke="#777" strokeWidth="3" />
        ))}
        {columnNumbers.slice(1).map((n, i) => (
          <path key={n} d={`M${357 + i * 102} 116v16M${357 + i * 102} 770v17`} strokeWidth="4" />
        ))}
        {rowLetters.slice(1).map((n, i) => (
          <path key={n} d={`M239 ${238 + i * 106}h16M1171 ${238 + i * 106}h17`} strokeWidth="4" />
        ))}
      </g>
      <g fill="#666">
        {pipeRows.map(toCells).map((cells, r) =>
          cells.map((cell, c) => (
            <rect key={`${r}-${c}`} x={previewCols[c] + 4} y={228 + r * pitch} width={cell.length * 4} height="5" />
          )),
        )}
      </g>
      {/* title, page and column heads, too small to read */}
      <path d="M338 178h156M1044 178h34M1096 178h6" stroke="#666" strokeWidth="9" strokeDasharray="8 3" />
      <path d="M321 211h20M400 211h41M497 211h55M582 211h75M688 211h34M746 215h137M891 215h137M1060 211h48" stroke="#888" strokeWidth="7" strokeDasharray="6 3" />
      <path d="M672 736h96" stroke="#e0a060" strokeWidth="12" strokeDasharray="9 5" />
      <path d="M1058 727h14M1058 739h14M1161 764h6" stroke="#e05040" strokeWidth="6" />
    </svg>
  );
}

function SymbolExplorer() {
  return (
    <section className="flex min-h-0 flex-1 flex-col bg-[#37434f]">
      <PanelHeader title="Symbol-Explorer" />
      <div className="flex h-6 shrink-0 items-center gap-[5px] border-t border-[#293540] bg-[#313e49] pr-[3px] pl-1.5 text-[#cfd3d6]">
        {['down', 'filters', 'explorer', 'refresh', 'collapse'].map((name) => (
          <button key={name} type="button" aria-label={name}>
            <Icon name={name} />
          </button>
        ))}
        <label htmlFor="filter" className="border-l border-[#56616b] pl-[5px] text-[6px] leading-3 font-medium">
          Filter:
        </label>
        <span className="relative flex h-3 min-w-0 flex-1 items-center bg-[#1c2935]">
          <span className="absolute left-1 size-[9px] bg-[#1cb0b8]" />
          <select id="filter" className="h-full w-full appearance-none pl-[18px] text-[6px] leading-3 font-medium">
            <option>P + I Diagram</option>
          </select>
        </span>
      </div>
      <div className="mx-[5px] flex min-h-0 flex-1 flex-col bg-[#303d48]">
        <div className="flex min-h-0 flex-1">
          <ul className="flex min-w-0 flex-1 flex-col overflow-hidden pl-1 text-[6px] leading-[9px] text-[#e0e3e5]">
            {libraryTree.map((node) => (
              <TreeRow key={node.label} node={node} wide />
            ))}
          </ul>
          <div className="flex w-[10px] shrink-0 flex-col items-center bg-[#f0f0f0] py-[1px] text-[#555]">
            <Icon name="chevron" className="size-2 rotate-180" />
            <span className="mt-[1px] h-[180px] w-full bg-[#cbcbcb]" />
            <Icon name="chevron" className="mt-auto size-2" />
          </div>
        </div>
        <div className="flex h-[10px] shrink-0 items-center gap-[1px] bg-[#f0f0f0] px-[1px] text-[#555]">
          <Icon name="chevron" className="size-2 rotate-90" />
          <span className="h-full w-[88px] bg-[#cbcbcb]" />
          <Icon name="chevron" className="mr-[10px] ml-auto size-2 -rotate-90" />
        </div>
      </div>
      <div className="flex h-[18px] shrink-0 items-center gap-[3px] pl-1 text-[6px] leading-[11px] font-medium text-[#d8dcdf]">
        {['Bibliothek', 'Kennung', 'Kategorie', 'Suchen', 'Favoriten'].map((tab, i) => (
          <button key={tab} type="button" className={clsx('px-0.5', i > 0 && 'bg-[#1c2935]')}>
            {tab}
          </button>
        ))}
      </div>
      <DockTabs tabs={[['docSearch', 'Symbol-Explorer'], ['grid', 'Makro-Explorer'], ['pin', 'Material-Explorer']]} />
    </section>
  );
}

export default function App() {
  return (
    <div className="flex h-screen w-full flex-col overflow-hidden bg-[#37434f] font-[Roboto,sans-serif]">
      <TitleBar />
      <Toolbars />
      <div className="flex min-h-0 flex-1 bg-[#13212d]">
        <ProjectExplorer />
        <div className="flex w-1 shrink-0 items-center">
          <span className="h-6 w-0.5 bg-[#4a4f55]" />
        </div>
        <DocumentView />
        <div className="flex w-1 shrink-0 items-center">
          <span className="h-6 w-0.5 bg-[#4a4f55]" />
        </div>
        <aside className="flex w-[190px] shrink-0 flex-col">
          <section className="bg-[#37434f] pb-0.5">
            <PanelHeader title="Vorschau" />
            <div className="mr-1 ml-0.5 flex h-[266px] items-center justify-center border-2 border-[#47525c] bg-white ring-1 ring-[#293540]">
              <Preview />
            </div>
          </section>
          <div className="flex h-[5px] shrink-0 items-center justify-center bg-[#293642]">
            <span className="h-0.5 w-[22px] bg-[#4f4f52]" />
          </div>
          <SymbolExplorer />
        </aside>
        <div className="w-3 shrink-0 pt-0.5">
          <button
            type="button"
            className="flex h-[66px] w-full rotate-180 items-center gap-0.5 bg-[#1f2c38] text-[6px] leading-3 font-medium text-[#d8dcdf] [writing-mode:vertical-rl]"
          >
            <Icon name="list" className="size-[9px]" />
            Installationszonen
          </button>
        </div>
      </div>
      <footer className="flex h-[11px] shrink-0 items-center bg-[#37434f] text-[7px] leading-[11px] text-[#d8dcdf]">
        <span className="w-14 border-r border-[#293540] pl-[1px]">Fertig</span>
        <span className="ml-auto w-[58px] border-l border-[#293540] pl-[3px]">145%</span>
        <span className="w-[54px] border-l border-[#293540] pl-0.5">304,41/124,69</span>
        <span className="w-[65px] border-l border-[#293540] pl-1 whitespace-pre">DIN A4  1:1</span>
      </footer>
    </div>
  );
}
